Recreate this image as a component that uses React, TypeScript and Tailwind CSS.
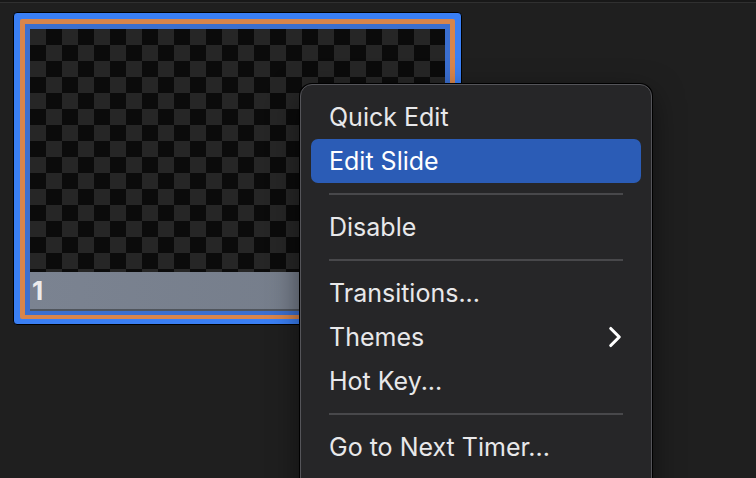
import { ChevronRight } from 'lucide-react'

const font = { fontFamily: 'Inter, "Noto Sans", sans-serif' }

type Row = { kind: 'item'; label: string; active?: boolean; submenu?: boolean } | { kind: 'sep' }

const rows: Row[] = [
  { kind: 'item', label: 'Quick Edit' },
  { kind: 'item', label: 'Edit Slide', active: true },
  { kind: 'sep' },
  { kind: 'item', label: 'Disable' },
  { kind: 'sep' },
  { kind: 'item', label: 'Transitions...' },
  { kind: 'item', label: 'Themes', submenu: true },
  { kind: 'item', label: 'Hot Key...' },
  { kind: 'sep' },
  { kind: 'item', label: 'Go to Next Timer...' },
]

function SlideThumb() {
  return (
    <div className="w-[449px] rounded-[4px] border border-black bg-[#3a7ff4] p-[6px] pb-[5px]">
      <div className="rounded-[2px] bg-[#d8854b] p-[5px] pb-[4px]">
        <div className="bg-[#3b6fd0] p-[5px] pb-[4px]">
          <div className="flex flex-col">
            {/* transparent slide background */}
            <div className="h-[243px] bg-[conic-gradient(#0b0b0b_25%,#262626_0_50%,#0b0b0b_0_75%,#262626_0)] bg-[length:32px_32px]" />
            <div className="flex h-[37px] items-center bg-gradient-to-r from-[#7b8391] to-[#737b88] pl-[2px]">
              <span className="text-[26px] font-bold leading-none text-[#ececec]">1</span>
            </div>
            <div className="h-[2px] bg-[#50555c]" />
          </div>
        </div>
      </div>
    </div>
  )
}

function ContextMenu() {
  return (
    <div className="absolute left-[300px] top-[84px] w-[352px] rounded-[12px] border border-[#55555a] bg-[#262628] px-[10px] pt-[10px] pb-[60px] shadow-[0_0_0_1px_#000,0_10px_30px_rgba(0,0,0,0.5)]">
      {rows.map((row, i) =>
        row.kind === 'sep' ? (
          <div key={i} className="flex h-[22px] items-center px-[18px]">
            <div className="h-[2px] w-full bg-[#48484b]" />
          </div>
        ) : (
          <div
            key={i}
            className={`flex h-[44px] items-center justify-between rounded-[7px] pl-[18px] pr-[9px] text-[25px] ${
              row.active ? 'bg-[#2b5cb6] text-white' : 'text-[#e8e8ea]'
            }`}
          >
            <span className="leading-none">{row.label}</span>
            {row.submenu && <ChevronRight className="h-[34px] w-[34px] text-white" strokeWidth={2.2} />}
          </div>
        ),
      )}
    </div>
  )
}

export default function App() {
  return (
    <div className="relative h-[478px] w-[756px] overflow-hidden bg-[#1f1f1f]" style={font}>
      <div className="h-[3px] border-b border-[#303030] bg-[#181818]" />
      <div className="pl-[13px] pt-[9px]">
        <SlideThumb />
      </div>
      <ContextMenu />
    </div>
  )
}
